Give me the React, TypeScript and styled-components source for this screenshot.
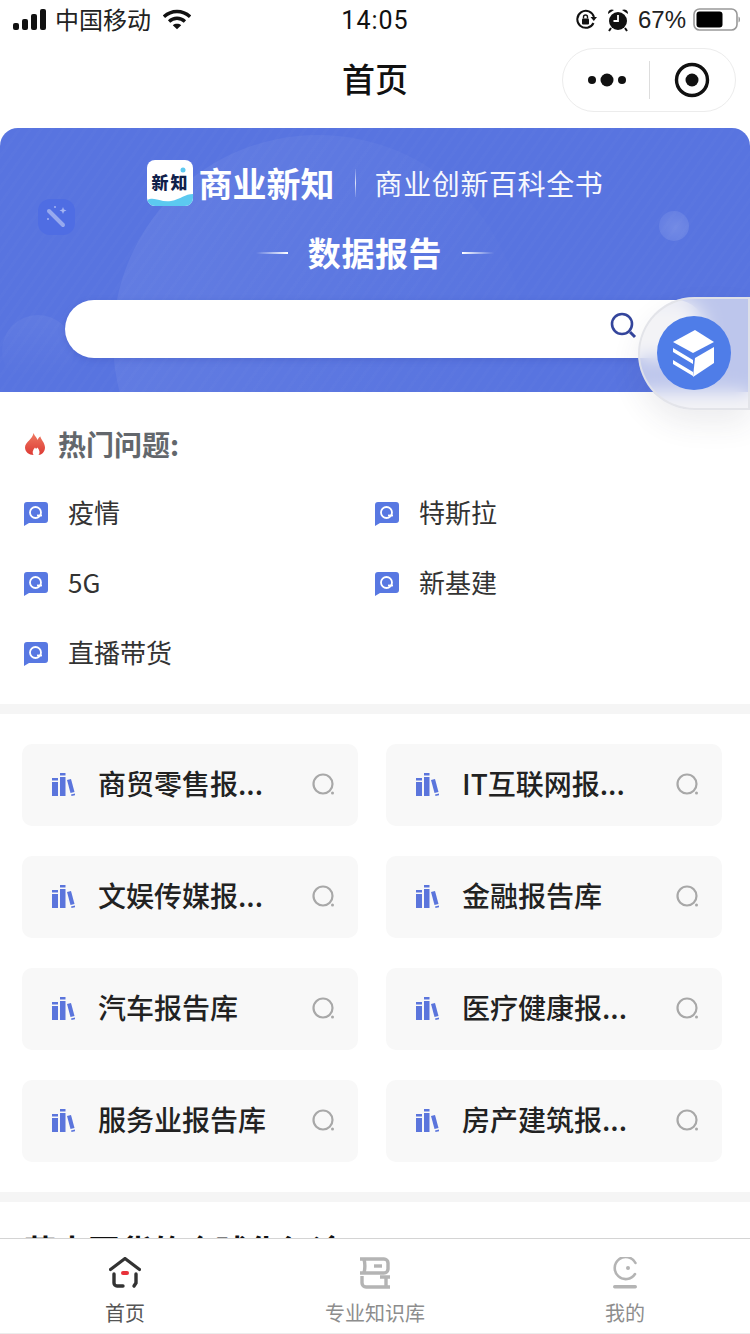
import React from "react";
import styled, { createGlobalStyle } from "styled-components";

const CJK = `"Noto Sans CJK SC", "Liberation Sans", sans-serif`;
const Global = createGlobalStyle`
  html, body { margin: 0; padding: 0; background: #fff; }
  body { font-family: ${CJK}; }
`;
const Page = styled.div`
  position: relative;
  width: 750px;
  height: 1334px;
  overflow: hidden;
  background: #fff;
  display: flex;
  flex-direction: column;
`;
const StatusBar = styled.div`
  height: 40px;
  padding: 0 10px 0 13px;
  display: flex;
  align-items: center;
  font-family: "Liberation Sans", "Noto Sans CJK SC", sans-serif;
  color: #111;
  position: relative;
`;
const Carrier = styled.span`
  font-family: ${CJK};
  font-size: 24px;
  line-height: 36px;
  margin: -3px 0 0 8px;
  color: #222;
`;
const Clock = styled.span`
  position: absolute;
  left: 0;
  right: 0;
  text-align: center;
  font-family: Roboto, "Liberation Sans", sans-serif;
  font-weight: 400;
  font-size: 25px;
  letter-spacing: 1px;
  color: #111;
`;
const StatusRight = styled.div`
  margin-left: auto;
  display: flex;
  align-items: center;
  font-size: 24px;
  color: #222;
`;
const StatusPercent = styled.span`
  margin: 0 7px 0 9px;
`;
const NavBar = styled.div`
  height: 88px;
  padding-bottom: 12px;
  box-sizing: border-box;
  display: flex;
  align-items: center;
  justify-content: center;
  position: relative;
  font-size: 33px;
  font-weight: 500;
  color: #111;
`;
const Capsule = styled.div`
  position: absolute;
  right: 14px;
  top: 8px;
  width: 174px;
  height: 64px;
  box-sizing: border-box;
  border: 1px solid #ececec;
  border-radius: 32px;
  display: flex;
  align-items: center;
`;
const CapsuleDivider = styled.i`
  width: 1px;
  height: 38px;
  background: #ddd;
`;
const CapsuleCell = styled.div`
  flex: 1;
  display: flex;
  justify-content: center;
  align-items: center;
`;
const Hero = styled.div`
  position: relative;
  height: 264px;
  border-radius: 18px 18px 0 0;
  overflow: hidden;
  background: repeating-linear-gradient(125deg, rgba(255,255,255,0) 0 6px, rgba(255,255,255,.012) 6px 9px), #5874e0;
  display: flex;
  flex-direction: column;
  align-items: center;
`;
const HeroCircle = styled.div`
  position: absolute;
  left: 113px;
  top: 7px;
  width: 410px;
  height: 410px;
  border-radius: 50%;
  background: linear-gradient(115deg, rgba(255,255,255,.07), rgba(255,255,255,.01) 70%, rgba(255,255,255,0));
`;
const HeroBubble = styled.div`
  position: absolute;
  left: 2px;
  top: 187px;
  width: 72px;
  height: 72px;
  border-radius: 50%;
  background: linear-gradient(180deg, rgba(255,255,255,.05), rgba(255,255,255,0) 85%);
`;
const HeroOrb = styled.div`
  position: absolute;
  left: 659px;
  top: 83px;
  width: 30px;
  height: 30px;
  border-radius: 50%;
  background: radial-gradient(circle at 55% 55%, rgba(255,255,255,.16), rgba(255,255,255,.05));
`;
const WandBadge = styled.div`
  position: absolute;
  left: 38px;
  top: 71px;
  width: 37px;
  height: 36px;
  border-radius: 12px;
  background: #4f6de3;
  display: flex;
  align-items: center;
  justify-content: center;
`;
const BrandRow = styled.div`
  position: relative;
  display: flex;
  align-items: center;
  margin-top: 32px;
  height: 46px;
`;
const LogoTile = styled.div`
  position: relative;
  width: 46px;
  height: 46px;
  border-radius: 8px;
  overflow: hidden;
  background: #fff;
  color: #10204a;
  font-size: 17px;
  font-weight: 900;
  line-height: 44px;
  text-align: center;
  letter-spacing: 2px;
  text-indent: 2px;
  white-space: nowrap;
  flex: none;
`;
const LogoWave = styled.svg`
  position: absolute;
  left: 0;
  top: 0;
  display: block;
`;
const BrandName = styled.span`
  margin-left: 6px;
  font-size: 34px;
  line-height: 44px;
  font-weight: 700;
  color: #fff;
  width: 136px;
  white-space: nowrap;
`;
const BrandBar = styled.i`
  width: 1px;
  height: 28px;
  background: linear-gradient(180deg, rgba(255,255,255,.1), rgba(255,255,255,.8) 50%, rgba(255,255,255,.1));
  margin: 0 19px 0 20px;
`;
const BrandSlogan = styled.span`
  font-size: 28px;
  line-height: 44px;
  color: #fff;
  letter-spacing: .6px;
  opacity: .95;
  white-space: nowrap;
`;
const TitleRow = styled.div`
  position: relative;
  margin-top: 22px;
  height: 48px;
  display: flex;
  align-items: center;
  gap: 20px;
`;
const TitleDash = styled.i<{ $flip?: boolean }>`
  width: 32px;
  height: 2px;
  margin-top: 2px;
  background: linear-gradient(${(p) => (p.$flip ? "270deg" : "90deg")}, rgba(255,255,255,0), #fff);
`;
const TitleText = styled.span`
  font-size: 33px;
  font-weight: 700;
  color: #fff;
  letter-spacing: .6px;
`;
const SearchBox = styled.div`
  position: absolute;
  left: 65px;
  top: 172px;
  width: 640px;
  height: 58px;
  border-radius: 29px;
  background: #fff;
  box-shadow: 0 2px 6px rgba(50, 70, 170, .25);
  display: flex;
  align-items: center;
  justify-content: flex-end;
  padding: 0 67px 6px 0;
  box-sizing: border-box;
`;
const FloatWrap = styled.div`
  position: absolute;
  left: 638px;
  top: 297px;
  width: 112px;
  height: 113px;
  border-radius: 57px 0 0 57px;
  border: 2px solid rgba(225, 226, 232, .9);
  box-sizing: border-box;
  background: rgba(238, 238, 242, .68);
  backdrop-filter: blur(9px);
  box-shadow: 0 14px 30px rgba(60, 60, 80, .09);
`;
const FloatButton = styled.div`
  position: absolute;
  left: 17px;
  top: 17px;
  width: 74px;
  height: 74px;
  border-radius: 50%;
  background: #4f7de8;
`;
const Hot = styled.section`
  padding: 34px 0 0 24px;
  height: 312px;
  box-sizing: border-box;
`;
const HotHead = styled.div`
  display: flex;
  align-items: center;
  gap: 12px;
  height: 36px;
  font-size: 28px;
  font-weight: 700;
  color: #63676c;
`;
const HotGrid = styled.div`
  display: grid;
  grid-template-columns: 351px 1fr;
  grid-auto-rows: 70px;
  margin-top: 33px;
`;
const HotItem = styled.div`
  display: flex;
  align-items: center;
  gap: 20px;
  height: 32px;
  font-size: 26px;
  color: #333;
`;
const Divider = styled.div`
  height: 10px;
  background: #f5f5f5;
  flex: none;
`;
const Cards = styled.section`
  display: grid;
  grid-template-columns: 336px 336px;
  column-gap: 28px;
  row-gap: 30px;
  padding: 30px 28px 30px 22px;
`;
const Card = styled.div`
  height: 82px;
  border-radius: 10px;
  background: #f8f8f8;
  display: flex;
  align-items: center;
  padding: 0 22px 0 29px;
  box-sizing: border-box;
`;
const CardText = styled.span`
  flex: 1;
  margin: -5px 0 0 23px;
  font-size: 28px;
  font-weight: 500;
  color: #222;
  white-space: nowrap;
`;
const ArticleTitle = styled.div`
  padding: 24px 0 0 24px;
  font-size: 32px;
  font-weight: 700;
  color: #111;
  white-space: nowrap;
`;
const TabBar = styled.nav`
  position: absolute;
  left: 0;
  right: 0;
  bottom: 0;
  height: 96px;
  background: #fff;
  border-top: 1px solid #d4d4d4;
  border-bottom: 1px solid #ececec;
  display: grid;
  grid-template-columns: repeat(3, 1fr);
  box-sizing: border-box;
`;
const TabItem = styled.div<{ $active?: boolean }>`
  display: flex;
  flex-direction: column;
  align-items: center;
  font-size: 20px;
  line-height: 28px;
  padding-top: 18px;
  color: ${(p) => (p.$active ? "#555" : "#8d8d8d")};
  gap: 10px;
`;

const Wifi = () => (
  <svg width="28" height="22" viewBox="0 0 30 22" style={{ marginLeft: 12 }}>
    <path d="M1 7.5C9 0 21 0 29 7.5" fill="none" stroke="#111" strokeWidth="3.6" />
    <path d="M6.5 12.5c5-4.5 12-4.5 17 0" fill="none" stroke="#111" strokeWidth="3.6" />
    <path d="M10.5 16.5 15 21l4.5-4.5c-2.5-2-6.500-2-9 0z" fill="#111" />
  </svg>
);
const Signal = () => (
  <svg width="34" height="22" viewBox="0 0 34 22">
    <rect x="0" y="14" width="6" height="7" rx="2" fill="#111" />
    <rect x="9" y="10" width="6" height="11" rx="2" fill="#111" />
    <rect x="18" y="5" width="6" height="16" rx="2" fill="#111" />
    <rect x="27" y="0" width="6" height="21" rx="2" fill="#111" />
  </svg>
);
const RotationLock = () => (
  <svg width="22" height="22" viewBox="0 0 22 22">
    <path d="M18.500 14A8.500 8.500 0 1 1 19 8" fill="none" stroke="#111" strokeWidth="2" />
    <path d="M15.500 8h6.500l-3.200 4z" fill="#111" />
    <rect x="7" y="9.500" width="7" height="6" rx="1" fill="#111" />
    <path d="M8.500 9.500V8a2 2 0 0 1 4 0v1.500" fill="none" stroke="#111" strokeWidth="1.400" />
  </svg>
);
const Alarm = () => (
  <svg width="22" height="24" viewBox="0 0 22 24" style={{ marginLeft: 10 }}>
    <circle cx="11" cy="13" r="9" fill="#111" />
    <path d="M1 6a4 4 0 0 1 6-4zM21 6a4 4 0 0 0-6-4z" fill="#111" />
    <path d="M4 20l-2 3M18 20l2 3" stroke="#111" strokeWidth="2" />
    <path d="M11 7v6H6.500" fill="none" stroke="#fff" strokeWidth="1.800" />
  </svg>
);
const Battery = () => (
  <svg width="47" height="24" viewBox="0 0 47 24">
    <rect x="1" y="1" width="43" height="21" rx="5.500" fill="none" stroke="#999" strokeWidth="1.600" />
    <rect x="3.500" y="3.500" width="26" height="16" rx="3" fill="#000" />
    <path d="M45.500 8.500c2 .6 2 5.400 0 6z" fill="#999" />
  </svg>
);
const Dots = () => (
  <svg width="38" height="14" viewBox="0 0 38 14" style={{ display: "block", marginLeft: 3 }}>
    <circle cx="4" cy="7" r="4" fill="#111" />
    <circle cx="19" cy="7" r="6.500" fill="#111" />
    <circle cx="34" cy="7" r="4" fill="#111" />
  </svg>
);
const Target = () => (
  <svg width="36" height="36" viewBox="0 0 36 36" style={{ display: "block" }}>
    <circle cx="18" cy="18" r="15.500" fill="none" stroke="#111" strokeWidth="3.400" />
    <circle cx="18" cy="18" r="6.500" fill="#111" />
  </svg>
);
const Wand = () => (
  <svg width="26" height="26" viewBox="0 0 26 26">
    <path d="M5 7l14 14" stroke="#97a9ee" strokeWidth="4" strokeLinecap="round" />
    <path d="M19 3l1 2.500 2.500 1-2.500 1-1 2.500-1-2.500-2.500-1 2.500-1z" fill="#a5b5f2" />
    <circle cx="11" cy="3" r="1" fill="#a5b5f2" />
    <circle cx="4" cy="15" r="1" fill="#a5b5f2" />
  </svg>
);
const HeroSearch = () => (
  <svg width="28" height="28" viewBox="0 0 28 28" style={{ display: "block" }}>
    <circle cx="12" cy="12" r="10" fill="none" stroke="#34459c" strokeWidth="2.600" />
    <path d="M20 20l5 5" stroke="#34459c" strokeWidth="3" />
  </svg>
);
const Books = () => (
  <svg width="74" height="74" viewBox="0 0 74 74" style={{ display: "block" }}>
    <path d="M16 26 38 14l19 12-21 11z" fill="#fff" />
    <path d="M38 42l19-11v16L36 61z" fill="#fff" />
    <path d="M16 32l20 12v4L16 36zM16 44l20 12v4L16 48z" fill="#fff" />
  </svg>
);
const Flame = () => (
  <svg width="22" height="24" viewBox="0 0 22 24" style={{ display: "block" }}>
    <defs>
      <linearGradient id="fl" x1="0" y1="0" x2="0" y2="1">
        <stop offset="0" stopColor="#ee7a62" />
        <stop offset="1" stopColor="#dd3a34" />
      </linearGradient>
    </defs>
    <path d="M9.500 1c1 3 3 4 4 7 .5-1.500 1.500-3 3-3.500-.5 2 4.500 6 4.500 11 0 4.500-3.500 7.500-6.500 7.500 1.500-2 1.500-4.500-1-7.500-1 1.500-2 1.500-2.500 0-2.500 2.500-3 5.500-1.500 7.500C5 23 1 20 1 15.500 1 10 9 7 9.500 1z" fill="url(#fl)" />
  </svg>
);
const Bubble = () => (
  <svg width="24" height="24" viewBox="0 0 24 24" style={{ flex: "none", display: "block", marginTop: 6 }}>
    <path d="M3 0h18a3 3 0 0 1 3 3v15a3 3 0 0 1-3 3H5l-5 3V3a3 3 0 0 1 3-3z" fill="#5878e2" />
    <circle cx="11.500" cy="10.500" r="5.500" fill="none" stroke="#fff" strokeWidth="1.800" />
    <path d="M13 13.500h5" stroke="#fff" strokeWidth="1.800" />
  </svg>
);
const Shelf = () => (
  <svg width="24" height="24" viewBox="0 0 24 24" style={{ flex: "none", display: "block" }}>
    <g fill="#5b75dc">
      <rect x="1" y="5" width="6" height="2.500" />
      <rect x="1" y="9" width="6" height="14" />
      <rect x="9" y="0" width="5.500" height="2.500" />
      <rect x="9" y="4" width="5.500" height="19" />
      <path d="M16 7l4-1 3.500 13-4 1z" />
      <path d="M20 21.500l4-1 .5 1.500-4 1z" />
    </g>
  </svg>
);
const GreySearch = () => (
  <svg width="24" height="24" viewBox="0 0 24 24" style={{ flex: "none", display: "block", marginLeft: -1 }}>
    <circle cx="11" cy="11" r="9.500" fill="none" stroke="#a8a8a8" strokeWidth="2.200" />
    <circle cx="20.500" cy="20" r="1.500" fill="#a8a8a8" />
  </svg>
);
const HomeIcon = () => (
  <svg width="32" height="32" viewBox="0 0 32 32" style={{ display: "block" }}>
    <path d="M1.500 12.500 16 1.500l14.500 11" fill="none" stroke="#333" strokeWidth="3.200" strokeLinecap="round" strokeLinejoin="round" />
    <path d="M5 17v9a3 3 0 0 0 3 3h6M27 17v9l-2 3" fill="none" stroke="#333" strokeWidth="3.400" strokeLinecap="round" />
    <rect x="12" y="14" width="8" height="4" rx="2" fill="#e8323a" />
  </svg>
);
const LibraryIcon = () => (
  <svg width="34" height="32" viewBox="0 0 34 32" style={{ display: "block" }}>
    <g fill="none" stroke="#b4b4b4" strokeWidth="3.400">
      <path d="M2 2h24a4 4 0 0 1 4 4v6a4 4 0 0 1-4 4H2" />
      <path d="M6 2c1 4 1 10 0 14" />
      <path d="M16 9h8" />
      <path d="M4 19v7a4 4 0 0 0 4 4h24" />
      <path d="M22 20h10M28 20v9" />
    </g>
  </svg>
);
const MineIcon = () => (
  <svg width="28" height="32" viewBox="0 0 28 32" style={{ display: "block" }}>
    <path d="M24 17A11 11 0 1 1 24.500 6" fill="none" stroke="#b4b4b4" strokeWidth="2.600" strokeLinecap="round" />
    <circle cx="17" cy="11" r="2" fill="#b4b4b4" />
    <rect x="2" y="28" width="24" height="3.500" rx="1.700" fill="#b4b4b4" />
  </svg>
);

const hot = ["疫情", "特斯拉", "5G", "新基建", "直播带货"];
const cards = [
  "商贸零售报...", "IT互联网报...", "文娱传媒报...", "金融报告库",
  "汽车报告库", "医疗健康报...", "服务业报告库", "房产建筑报...",
];

export default function App() {
  return (
    <Page>
      <Global />
      <StatusBar>
        <Signal />
        <Carrier>中国移动</Carrier>
        <Wifi />
        <Clock>14:05</Clock>
        <StatusRight>
          <RotationLock />
          <Alarm />
          <StatusPercent>67%</StatusPercent>
          <Battery />
        </StatusRight>
      </StatusBar>
      <NavBar>
        首页
        <Capsule>
          <CapsuleCell><Dots /></CapsuleCell>
          <CapsuleDivider />
          <CapsuleCell><Target /></CapsuleCell>
        </Capsule>
      </NavBar>
      <Hero>
        <HeroCircle />
        <HeroBubble />
        <HeroOrb />
        <WandBadge><Wand /></WandBadge>
        <BrandRow>
          <LogoTile>
            新知
            <LogoWave width="46" height="46" viewBox="0 0 46 46">
              <path d="M0 40c8-4 14 3 24 1s14-7 22-7v12H0z" fill="#5cc9f0" />
              <circle cx="36" cy="10" r="2.500" fill="#5cc9f0" />
            </LogoWave>
          </LogoTile>
          <BrandName>商业新知</BrandName>
          <BrandBar />
          <BrandSlogan>商业创新百科全书</BrandSlogan>
        </BrandRow>
        <TitleRow>
          <TitleDash />
          <TitleText>数据报告</TitleText>
          <TitleDash $flip />
        </TitleRow>
        <SearchBox><HeroSearch /></SearchBox>
      </Hero>
      <Hot>
        <HotHead><Flame />热门问题:</HotHead>
        <HotGrid>
          {hot.map((t) => (
            <HotItem key={t}><Bubble />{t}</HotItem>
          ))}
        </HotGrid>
      </Hot>
      <Divider />
      <Cards>
        {cards.map((c) => (
          <Card key={c}>
            <Shelf />
            <CardText>{c}</CardText>
            <GreySearch />
          </Card>
        ))}
      </Cards>
      <Divider />
      <ArticleTitle>蔚来国货的全球化征途</ArticleTitle>
      <FloatWrap><FloatButton><Books /></FloatButton></FloatWrap>
      <TabBar>
        <TabItem $active><HomeIcon />首页</TabItem>
        <TabItem><LibraryIcon />专业知识库</TabItem>
        <TabItem><MineIcon />我的</TabItem>
      </TabBar>
    </Page>
  );
}
